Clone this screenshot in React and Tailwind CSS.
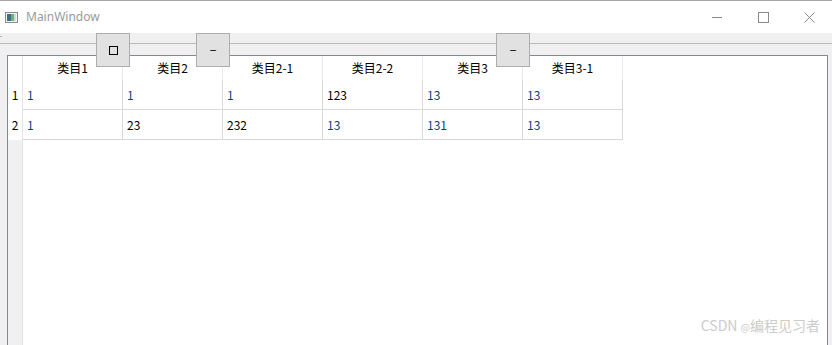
import React from "react";

const columns = ["类目1", "类目2", "类目2-1", "类目2-2", "类目3", "类目3-1"];

const rows = [
  ["1", "1", "1", "123", "13", "13"],
  ["1", "23", "232", "13", "131", "13"],
];

// digits that render with the blue cleartype tint in the reference
const blueish = (v) => v === "1" || v === "13" || v === "131";

function TitleBar() {
  return (
    <div className="h-[32px] bg-white flex items-center shrink-0">
      <svg width="13" height="11" viewBox="0 0 13 11" className="ml-[5px]">
        <rect x="0.5" y="0.5" width="12" height="10" fill="#f4f4f4" stroke="#8a8a8a" />
        <rect x="2" y="2" width="4" height="7" fill="#3c6f86" />
        <rect x="6" y="2" width="3" height="7" fill="#6fb07a" />
        <rect x="9" y="2" width="2" height="7" fill="#d8d8d8" />
      </svg>
      <span className="ml-[8px] text-[12px] text-[#9a9a9a] font-['Noto_Sans',sans-serif]">
        MainWindow
      </span>
      <div className="ml-auto flex items-center h-full">
        <div className="w-[46px] h-full flex items-center justify-center">
          <svg width="11" height="11" viewBox="0 0 11 11">
            <path d="M0 5.5H10" stroke="#8a8a8a" strokeWidth="1" />
          </svg>
        </div>
        <div className="w-[46px] h-full flex items-center justify-center">
          <svg width="11" height="11" viewBox="0 0 11 11">
            <rect x="0.5" y="0.5" width="10" height="10" fill="none" stroke="#8a8a8a" />
          </svg>
        </div>
        <div className="w-[46px] h-full flex items-center justify-center">
          <svg width="11" height="11" viewBox="0 0 11 11">
            <path d="M0.5 0.5L10.5 10.5M10.5 0.5L0.5 10.5" stroke="#8a8a8a" strokeWidth="1" />
          </svg>
        </div>
      </div>
    </div>
  );
}

function HeaderButton({ children, className }) {
  return (
    <div
      className={`absolute top-[33px] w-[34px] h-[34px] bg-[#e1e1e1] border border-[#adadad] flex items-center justify-center ${className}`}
    >
      {children}
    </div>
  );
}

export default function App() {
  return (
    <div className="relative w-[832px] h-[345px] overflow-hidden bg-[#f0f0f0] font-['Noto_Sans_CJK_SC',sans-serif] text-black">
      <div className="flex flex-col h-full">
        <div className="h-px bg-[#a8a8a8] shrink-0" />
        <TitleBar />

        {/* toolbar strip */}
        <div className="h-[10px] shrink-0 relative">
          <div className="absolute left-0 top-[3px] w-[2px] h-px bg-[#b0b0b0]" />
        </div>
        <div className="h-px bg-[#b9b9b9] shrink-0" />
        <div className="h-[11px] shrink-0" />

        {/* table frame */}
        <div className="ml-[7px] w-[821px] flex-1 border border-b-0 border-[#828790] bg-white flex">
          <div className="w-[15px] shrink-0 flex flex-col border-r border-[#e3e3e3]">
            <div className="h-[24px] bg-white shrink-0" />
            {rows.map((_, i) => (
              <div
                key={i}
                className="h-[30px] bg-white shrink-0 flex items-center justify-center text-[12px]"
              >
                {i + 1}
              </div>
            ))}
            <div className="flex-1 bg-[#f0f0f0]" />
          </div>

          <div className="flex flex-col">
            <div className="flex h-[24px]">
              {columns.map((c) => (
                <div
                  key={c}
                  className="w-[100px] border-r border-[#e8e8e8] flex items-center justify-center text-[12px]"
                >
                  {c}
                </div>
              ))}
            </div>
            {rows.map((r, i) => (
              <div key={i} className="flex h-[30px]">
                {r.map((v, j) => (
                  <div
                    key={j}
                    className={`w-[100px] border-r border-b border-[#d8d8d8] flex items-center pl-[4px] text-[12px] ${
                      blueish(v) ? "text-[#0b3c8c]" : "text-black"
                    }`}
                  >
                    {v}
                  </div>
                ))}
              </div>
            ))}
          </div>
        </div>
      </div>

      {/* header section buttons */}
      <HeaderButton className="left-[96px]">
        <svg width="9" height="9" viewBox="0 0 9 9">
          <rect x="0.5" y="0.5" width="8" height="8" fill="none" stroke="#000" />
        </svg>
      </HeaderButton>
      <HeaderButton className="left-[196px]">
        <span className="text-[12px] leading-none">−</span>
      </HeaderButton>
      <HeaderButton className="left-[496px]">
        <span className="text-[12px] leading-none">−</span>
      </HeaderButton>

      {/* watermark */}
      <div className="absolute right-[12px] bottom-[9px] text-[14px] text-[#cccccc] font-['Noto_Sans_CJK_SC',sans-serif]">
        CSDN <span className="text-[10px]">@</span>编程见习者
      </div>
    </div>
  );
}
